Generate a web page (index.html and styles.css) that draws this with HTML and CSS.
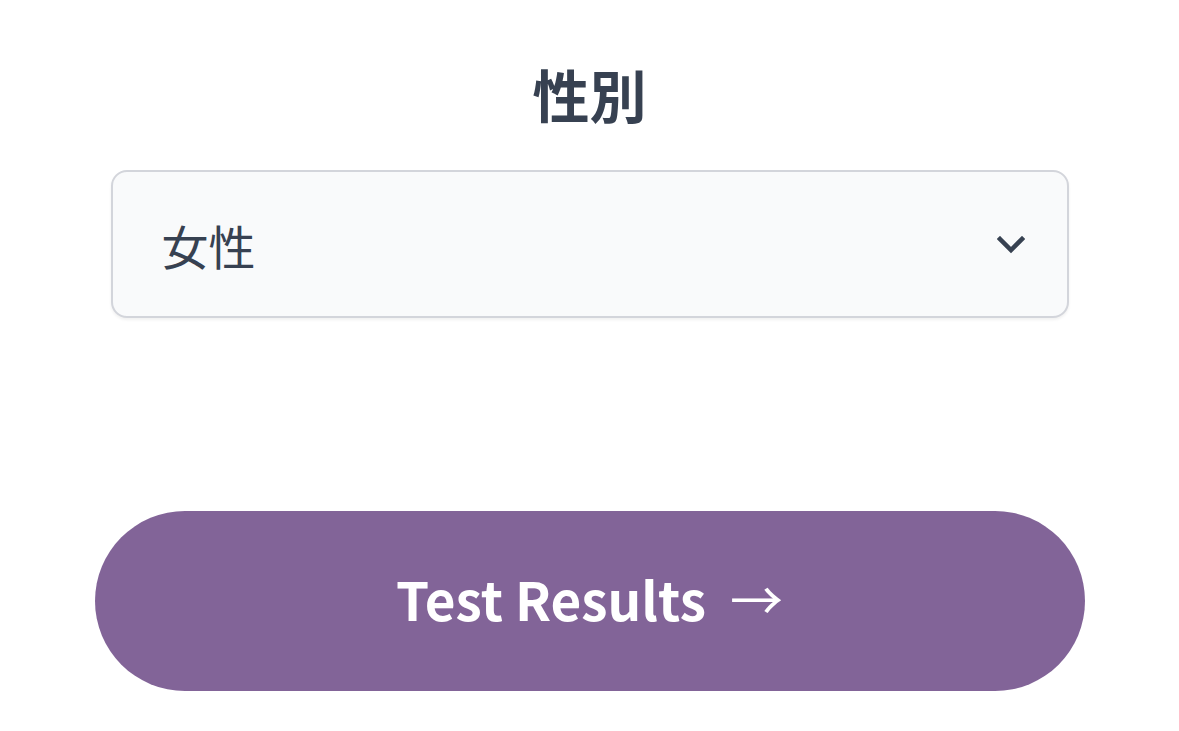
FILE: index.html
```html
<!DOCTYPE html>
<html lang="ja">
<head>
<meta charset="utf-8">
<link rel="stylesheet" href="styles.css">
</head>
<body>
<main class="page">
  <h2 class="label">性別</h2>
  <div class="select">
    <span class="select-value">女性</span>
    <svg class="chevron" viewBox="0 0 28 18" width="28" height="18"><path d="M3 3 L14 14 L25 3" fill="none" stroke="#374151" stroke-width="4.5" stroke-linecap="square"/></svg>
  </div>
  <button class="cta">Test Results <span class="arrow">→</span></button>
</main>
</body>
</html>
```

FILE: styles.css
```css
html, body {
  margin: 0;
  padding: 0;
  background: #ffffff;
}
body {
  font-family: "Noto Sans CJK JP", "Noto Sans", sans-serif;
  color: #374151;
}
.page {
  width: 1179px;
  display: flex;
  flex-direction: column;
  align-items: center;
  padding-top: 50px;
}
.label {
  margin: 0;
  font-size: 57px;
  font-weight: 700;
  line-height: 86px;
  color: #374151;
}
.select {
  margin-top: 34px;
  width: 958px;
  height: 148px;
  box-sizing: border-box;
  border: 2px solid #d3d5db;
  border-radius: 16px;
  background: #f9fafb;
  box-shadow: 0 2px 3px rgba(0,0,0,0.06);
  display: flex;
  align-items: center;
  justify-content: space-between;
  padding: 0 42px 0 49px;
}
.select-value {
  font-size: 47px;
  color: #374151;
  line-height: 1;
}
.chevron {
  display: block;
  margin-top: 2px;
}
.cta {
  margin-top: 193px;
  width: 990px;
  height: 180px;
  border: none;
  border-radius: 90px;
  background: #826498;
  color: #ffffff;
  font-family: "Noto Sans CJK JP", "Noto Sans", sans-serif;
  font-size: 53px;
  font-weight: 600;
  display: flex;
  align-items: center;
  justify-content: center;
  gap: 24px;
  padding: 0 0 6px 0;
}
.arrow {
  font-weight: 400;
}
```
